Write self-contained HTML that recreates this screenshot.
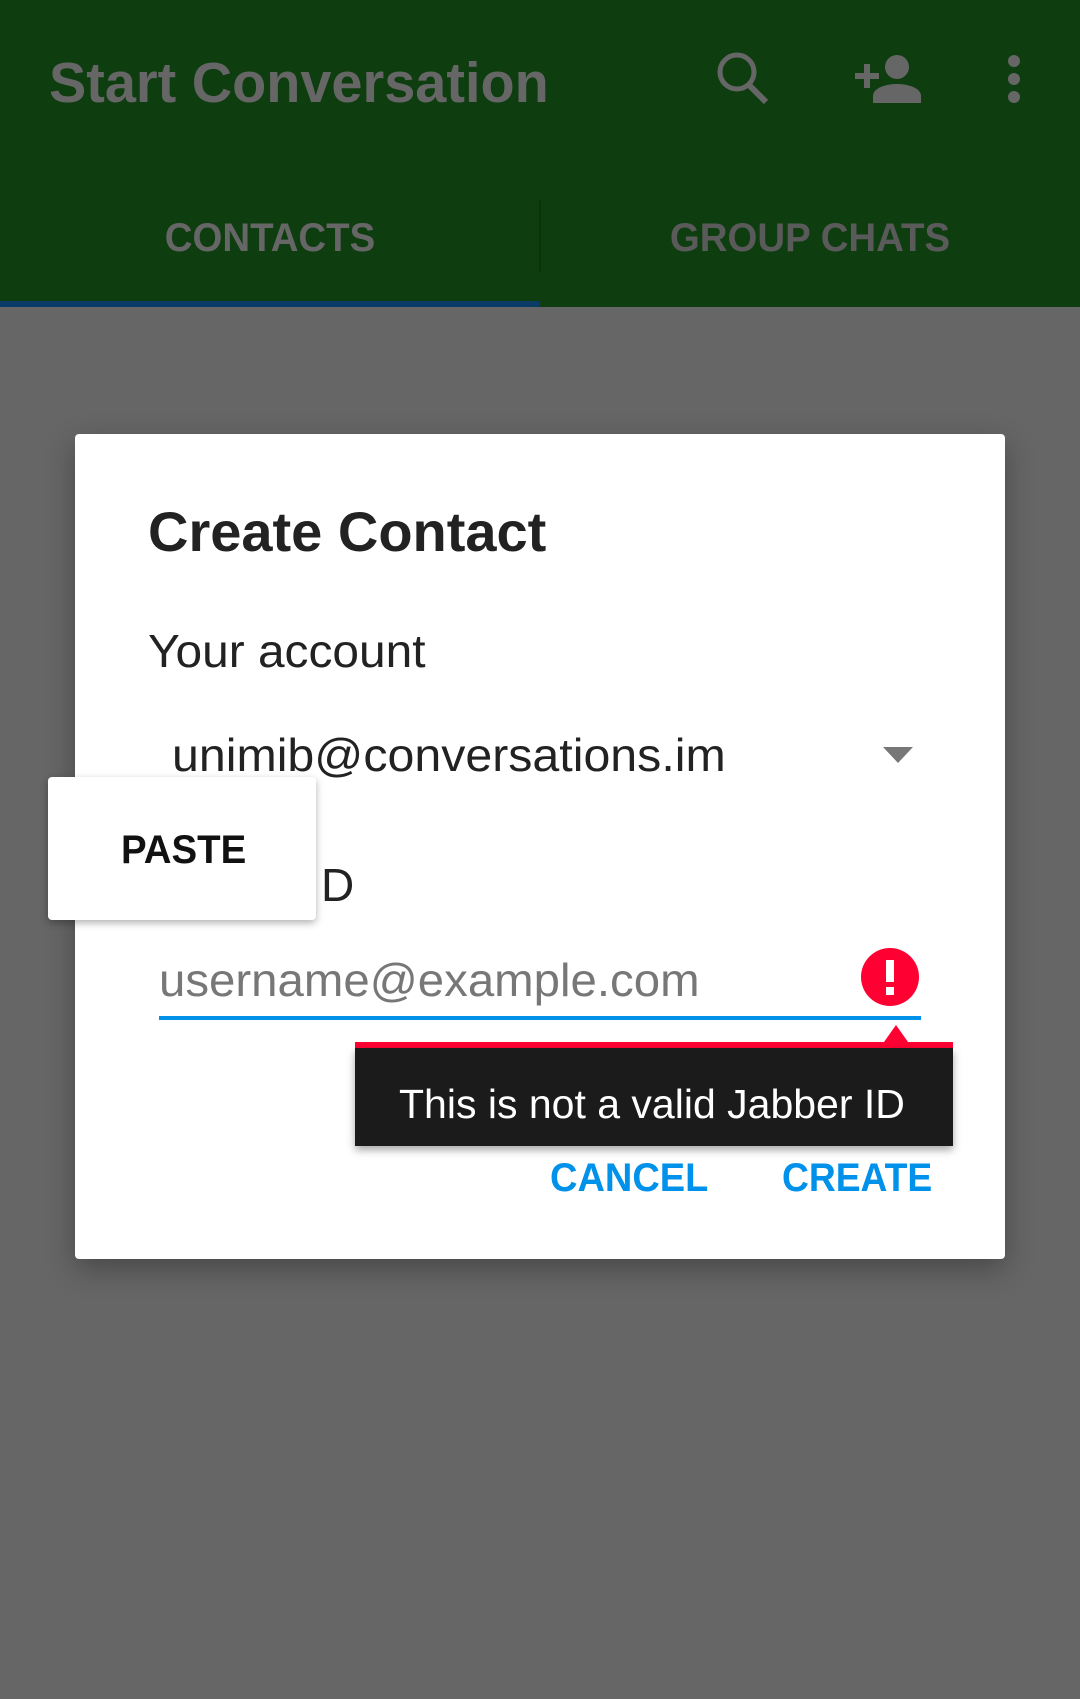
<!DOCTYPE html>
<html><head><meta charset="utf-8"><style>
*{margin:0;padding:0;box-sizing:border-box}
body{width:1080px;height:1699px;background:#666;position:relative;overflow:hidden;font-family:"Liberation Sans",sans-serif}
.t{position:absolute;white-space:nowrap;line-height:1;transform-origin:left top}
</style></head><body>
<div style="position:absolute;left:0;top:0;width:1080px;height:307px;background:#0e3d10"></div>
<div class="t" style="left:49px;top:55px;font-size:57px;color:#666;font-weight:bold;transform:scaleX(0.98)">Start Conversation</div>
<svg style="position:absolute;left:0;top:0" width="1080" height="140">
<circle cx="737" cy="72" r="17" fill="none" stroke="#666" stroke-width="5"/>
<line x1="749" y1="85" x2="766" y2="102" stroke="#666" stroke-width="6"/>
<circle cx="897" cy="67" r="12" fill="#666"/>
<path d="M873 103 V96 C873 88 886 84 897 84 C908 84 921 88 921 96 V103 Z" fill="#666"/>
<rect x="855" y="73" width="24" height="6" fill="#666"/><rect x="864" y="64" width="6" height="24" fill="#666"/>
<circle cx="1014" cy="61" r="6" fill="#666"/><circle cx="1014" cy="79" r="6" fill="#666"/><circle cx="1014" cy="97" r="6" fill="#666"/>
</svg>
<div class="t" style="left:0;width:540px;text-align:center;top:218px;font-size:40px;color:#666;font-weight:bold;transform:scaleX(0.96);transform-origin:center top">CONTACTS</div>
<div class="t" style="left:540px;width:540px;text-align:center;top:218px;font-size:40px;color:#5a5a5a;font-weight:bold;transform:scaleX(0.96);transform-origin:center top">GROUP CHATS</div>
<div style="position:absolute;left:539px;top:200px;width:2px;height:72px;background:#0a330c"></div>
<div style="position:absolute;left:0;top:301px;width:540px;height:6px;background:#0a3a66"></div>

<div style="position:absolute;left:75px;top:434px;width:930px;height:825px;background:#fff;border-radius:4px;box-shadow:0 10px 30px rgba(0,0,0,.3)"></div>
<div class="t" style="left:148px;top:504px;font-size:56px;color:#222;font-weight:bold;transform:scaleX(1.0)">Create Contact</div>
<div class="t" style="left:148px;top:628px;font-size:46px;color:#222;transform:scaleX(1.04)">Your account</div>
<div class="t" style="left:172px;top:732px;font-size:46px;color:#222;transform:scaleX(1.05)">unimib@conversations.im</div>
<svg style="position:absolute;left:880px;top:745px" width="36" height="20"><path d="M3 2 H33 L18 18Z" fill="#777"/></svg>
<div class="t" style="left:321px;top:862px;font-size:46px;color:#222">D</div>
<div class="t" style="left:159px;top:957px;font-size:46px;color:#777;transform:scaleX(1.03)">username@example.com</div>
<div style="position:absolute;left:159px;top:1016px;width:762px;height:4px;background:#0091ea"></div>
<svg style="position:absolute;left:855px;top:940px" width="80" height="110">
<circle cx="35" cy="37" r="29" fill="#ff0033"/>
<rect x="31" y="20" width="8" height="22" fill="#fff"/><rect x="31" y="47" width="8" height="8" fill="#fff"/>
<path d="M29 102 L41 85 L53 102Z" fill="#ff0033"/>
</svg>
<div style="position:absolute;left:48px;top:777px;width:268px;height:143px;background:#fff;border-radius:4px;box-shadow:0 3px 8px rgba(0,0,0,.3)"></div>
<div class="t" style="left:121px;top:830px;font-size:40px;color:#111;font-weight:bold;transform:scaleX(0.96)">PASTE</div>
<div style="position:absolute;left:355px;top:1042px;width:598px;height:6px;background:#ff0033"></div>
<div style="position:absolute;left:355px;top:1048px;width:598px;height:98px;background:#1b1b1b;box-shadow:0 4px 8px rgba(0,0,0,.35)"></div>
<div class="t" style="left:399px;top:1084px;font-size:41px;color:#fff;transform:scaleX(1.0)">This is not a valid Jabber ID</div>
<div class="t" style="left:550px;top:1158px;font-size:40px;color:#0091ea;font-weight:bold;transform:scaleX(0.95)">CANCEL</div>
<div class="t" style="left:782px;top:1158px;font-size:40px;color:#0091ea;font-weight:bold;transform:scaleX(0.93)">CREATE</div>
</body></html>
